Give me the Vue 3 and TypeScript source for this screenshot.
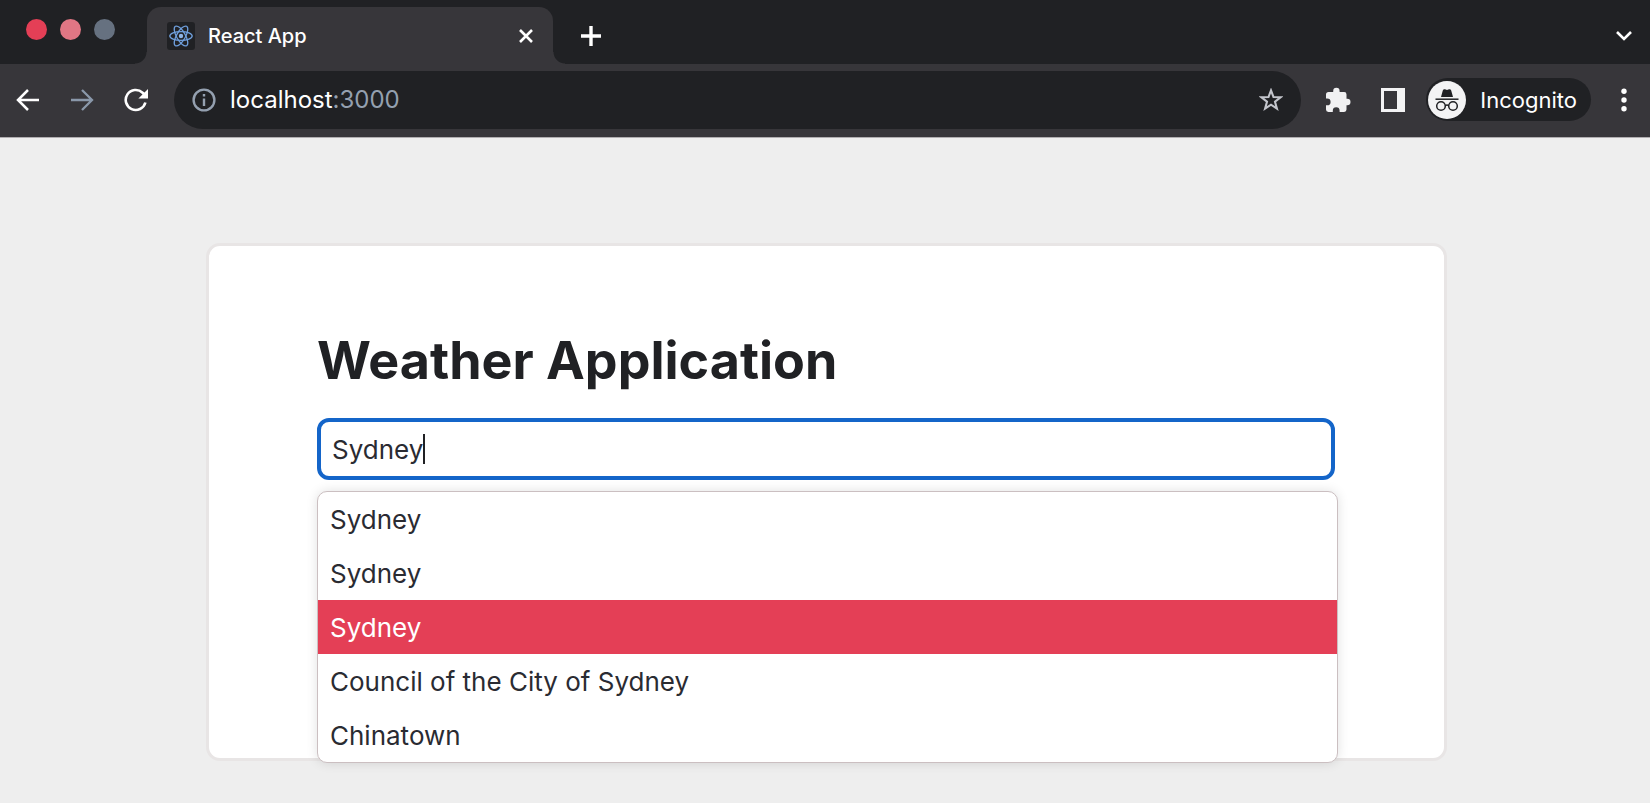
<script setup lang="ts">
import { nextTick, onMounted, ref, watch } from 'vue'

const query = ref('Sydney')
const active = ref(2)
const places = ['Sydney', 'Sydney', 'Sydney', 'Council of the City of Sydney', 'Chinatown']

const field = ref<HTMLInputElement | null>(null)
const caretOffset = ref(0)

function placeCaret(): void {
  const el = field.value
  const context = document.createElement('canvas').getContext('2d')
  if (!el || !context) return
  const style = getComputedStyle(el)
  context.font = `${style.fontWeight} ${style.fontSize} ${style.fontFamily}`
  caretOffset.value = Math.round(
    context.measureText(query.value).width + parseInt(style.paddingLeft) + parseInt(style.borderLeftWidth)
  )
}

function choose(index: number): void {
  active.value = index
  query.value = places[index]
}

onMounted(placeCaret)
watch(query, () => nextTick(placeCaret))
</script>

<template>
  <div class="browser">
    <header>
      <div class="tab-strip">
        <div class="lights">
          <button class="light close-light" aria-label="Close window"></button>
          <button class="light min-light" aria-label="Minimise window"></button>
          <button class="light max-light" aria-label="Zoom window"></button>
        </div>
        <div class="tab">
          <svg class="favicon" viewBox="0 0 28 28" aria-hidden="true">
            <rect width="28" height="28" rx="3" fill="#202124" />
            <g fill="none" stroke="#6f9fdc" stroke-width="1.3">
              <ellipse cx="14" cy="14" rx="11.2" ry="4.4" />
              <ellipse cx="14" cy="14" rx="11.2" ry="4.4" transform="rotate(60 14 14)" />
              <ellipse cx="14" cy="14" rx="11.2" ry="4.4" transform="rotate(120 14 14)" />
            </g>
            <circle cx="14" cy="14" r="2.2" fill="#8db4e6" />
          </svg>
          <span class="tab-title">React App</span>
          <button class="icon-button tab-close" aria-label="Close tab">
            <svg width="14" height="14" viewBox="0 0 14 14"><path d="M1 1l12 12M13 1l-12 12" stroke="#fff" stroke-width="2.6" /></svg>
          </button>
        </div>
        <button class="icon-button new-tab" aria-label="New tab">
          <svg width="20" height="20" viewBox="0 0 20 20"><path d="M10 0v20M0 10h20" stroke="#fff" stroke-width="3.4" /></svg>
        </button>
        <button class="icon-button tab-search" aria-label="Search tabs">
          <svg width="16" height="10" viewBox="0 0 16 10"><path d="M1 1l7 7 7-7" fill="none" stroke="#fff" stroke-width="2.6" /></svg>
        </button>
      </div>

      <div class="toolbar">
        <nav class="nav" aria-label="History">
          <button class="icon-button" aria-label="Back">
            <svg width="24" height="24" viewBox="0 0 24 24"><path d="M23 12H2.5M12 2L2 12l10 10" fill="none" stroke="#fff" stroke-width="2.5" /></svg>
          </button>
          <button class="icon-button" aria-label="Forward">
            <svg width="24" height="24" viewBox="0 0 24 24"><path d="M1 12h20.5M12 2l10 10-10 10" fill="none" stroke="#8a98aa" stroke-width="2.3" /></svg>
          </button>
          <button class="icon-button" aria-label="Reload">
            <svg width="24" height="24" viewBox="0 0 24 24">
              <path d="M21.4 14.5A10 10 0 1 1 18.6 4.7L21 7" fill="none" stroke="#fff" stroke-width="2.6" />
              <path d="M24 1v9.6h-9.6z" fill="#fff" />
            </svg>
          </button>
        </nav>
        <div class="address">
          <svg width="24" height="24" viewBox="0 0 24 24" aria-hidden="true">
            <circle cx="12" cy="12" r="10.4" fill="none" stroke="#94a0b0" stroke-width="2.4" />
            <path d="M12 10.5V18M12 6v2.400" stroke="#94a0b0" stroke-width="2.4" />
          </svg>
          <div class="url" role="textbox" contenteditable="true" spellcheck="false" aria-label="Address">localhost<span class="port">:3000</span></div>
          <button class="icon-button" aria-label="Bookmark this page">
            <svg width="24" height="24" viewBox="0 0 24 24">
              <path d="M12 2.400l2.500 6.600 7.100.3-5.600 4.400 1.900 6.900L12 16.700l-5.900 3.900L8 13.700 2.400 9.300l7.100-.3z" fill="none" stroke="#c3c5cc" stroke-width="2.1" />
            </svg>
          </button>
        </div>
        <button class="icon-button" aria-label="Extensions">
          <svg width="26" height="26" viewBox="0 0 26 26">
            <path d="M1 7.500Q1 5 3.500 5H8.200V4a3.200 3.200 0 0 1 6.400 0v1h4.600Q21.500 5 21.500 7.400v4.300h.7a3.300 3.300 0 0 1 0 6.600h-.7v4.300q0 2.400-2.400 2.400h-4.500v-1.300a3.400 3.400 0 0 0-6.800 0V25H3.400Q1 25 1 22.600v-4.300h1.200a3.400 3.400 0 0 0 0-6.800H1z" fill="#f1f1f2" />
          </svg>
        </button>
        <button class="icon-button" aria-label="Side panel">
          <svg width="24" height="24" viewBox="0 0 24 24">
            <path fill-rule="evenodd" d="M0 0h24v24H0zM3 3v18h13V3z" fill="#f3f3f4" />
          </svg>
        </button>
        <button class="profile">
          <svg width="38" height="38" viewBox="0 0 38 38" aria-hidden="true">
            <circle cx="19" cy="19" r="19" fill="#f3f3f4" />
            <path d="M13 16l1.800-6.400Q15.400 7.800 17 8.300l2 .6 2-.6q1.600-.5 2.200 1.300L25 16z" fill="#202124" />
            <path d="M7.500 18.200h23" stroke="#202124" stroke-width="1.500" />
            <g fill="none" stroke="#202124" stroke-width="1.500">
              <circle cx="13" cy="25" r="4.300" />
              <circle cx="25" cy="25" r="4.300" />
              <path d="M17.200 24.600q1.800-1.200 3.600 0" />
            </g>
          </svg>
          <span>Incognito</span>
        </button>
        <button class="icon-button menu" aria-label="Menu">
          <svg width="6" height="24" viewBox="0 0 6 24" fill="#fff">
            <circle cx="3" cy="3.200" r="2.700" />
            <circle cx="3" cy="12" r="2.700" />
            <circle cx="3" cy="20.800" r="2.700" />
          </svg>
        </button>
      </div>
    </header>

    <main>
      <section class="card">
        <h1><label for="city">Weather Application</label></h1>
        <div class="combo">
          <input
            id="city"
            ref="field"
            v-model="query"
            type="text"
            role="combobox"
            aria-controls="places"
            aria-expanded="true"
            autocomplete="off"
            spellcheck="false"
          />
          <i class="caret" :style="{ left: caretOffset + 'px' }"></i>
          <ul id="places" class="menu-list" role="listbox" aria-label="Places">
            <li
              v-for="(place, index) in places"
              :key="index"
              role="option"
              :aria-selected="index === active"
              :class="{ active: index === active }"
              @click="choose(index)"
            >{{ place }}</li>
          </ul>
        </div>
      </section>
    </main>
  </div>
</template>

<style>
body {
  background: #eee;
}
</style>

<style scoped>
.browser {
  min-height: 100vh;
  background: #eee;
  color: #202124;
  font-family: Inter, "Liberation Sans", sans-serif;
}

.browser * {
  box-sizing: border-box;
}

button {
  margin: 0;
  padding: 0;
  border: 0;
  background: none;
  color: inherit;
  font: inherit;
}

svg {
  display: block;
  flex: none;
}

.icon-button {
  display: flex;
  flex: none;
  align-items: center;
  justify-content: center;
}

.tab-strip {
  display: flex;
  height: 64px;
  padding: 7px 18px 0 26px;
  background: #202124;
}

.lights {
  display: flex;
  flex: none;
  gap: 13px;
  width: 121px;
  padding-top: 12px;
}

.light {
  width: 21px;
  height: 21px;
  border-radius: 50%;
}

.close-light {
  background: #e43f56;
}

.min-light {
  background: #e17684;
}

.max-light {
  background: #667180;
}

.tab {
  position: relative;
  display: flex;
  flex: 0 1 406px;
  align-items: center;
  padding: 0 20px;
  border-radius: 14px 14px 0 0;
  background: #37363a;
  color: #fff;
}

.tab::before,
.tab::after {
  position: absolute;
  bottom: 0;
  width: 12px;
  height: 12px;
  content: "";
}

.tab::before {
  right: 100%;
  background: radial-gradient(circle at 0 0, #202124 11px, #37363a 12px);
}

.tab::after {
  left: 100%;
  background: radial-gradient(circle at 100% 0, #202124 11px, #37363a 12px);
}

.favicon {
  width: 28px;
  height: 28px;
}

.tab-title {
  flex: 1;
  margin-left: 13px;
  font-size: 20px;
  font-weight: 500;
  line-height: 24px;
}

.new-tab {
  width: 20px;
  margin-left: 28px;
}

.tab-search {
  margin-left: auto;
}

.toolbar {
  display: flex;
  align-items: center;
  height: 74px;
  padding: 0 23px 2px 16px;
  border-bottom: 1px solid #b0adb0;
  background: #37363a;
  color: #fff;
}

.nav {
  display: flex;
  flex: none;
  gap: 30px;
  margin-right: 26px;
}

.address {
  display: flex;
  flex: 1;
  align-items: center;
  height: 58px;
  margin-right: 24px;
  padding: 0 18px;
  border-radius: 29px;
  background: #202124;
}

.url {
  flex: 1;
  margin-left: 14px;
  font-size: 24px;
  line-height: 28px;
}

.port {
  color: #94a0b0;
}

.toolbar > .icon-button + .icon-button {
  margin-left: 30px;
}

.profile {
  display: flex;
  flex: none;
  align-items: center;
  height: 43px;
  margin: 0 30px 0 21px;
  padding: 0 14px 0 2px;
  border-radius: 22px;
  background: #202124;
  font-size: 22px;
  line-height: 28px;
}

.profile span {
  margin-left: 14px;
}

main {
  padding: 105px 203px 42px 206px;
}

.card {
  min-height: 518px;
  padding: 83px 109px 0 108px;
  border: 3px solid #e8e5e5;
  border-radius: 14px;
  background: #fff;
}

h1 {
  margin: 0 0 25px;
  font-size: 52px;
  font-weight: 700;
  line-height: 64px;
}

.combo {
  position: relative;
}

input {
  display: block;
  width: 100%;
  height: 62px;
  padding: 0 11px;
  border: 4px solid #1465c9;
  border-radius: 12px;
  outline: 0;
  background: #fff;
  caret-color: transparent;
  color: #2a2b32;
  font-family: Inter, "Liberation Sans", sans-serif;
  font-size: 26px;
}

.caret {
  position: absolute;
  top: 16px;
  width: 2px;
  height: 30px;
  background: #202124;
}

.menu-list {
  position: absolute;
  top: 100%;
  right: -3px;
  left: 0;
  margin: 11px 0 0;
  padding: 0;
  border: 1px solid #cbbfc1;
  border-radius: 10px;
  background: #fff;
  box-shadow: 0 0 12px rgba(0, 0, 0, 0.12);
  color: #2a2b32;
  list-style: none;
}

li {
  padding: 2px 12px 0;
  font-size: 26px;
  line-height: 52px;
}

.active {
  background: #e43f56;
  color: #fff;
}
</style>
